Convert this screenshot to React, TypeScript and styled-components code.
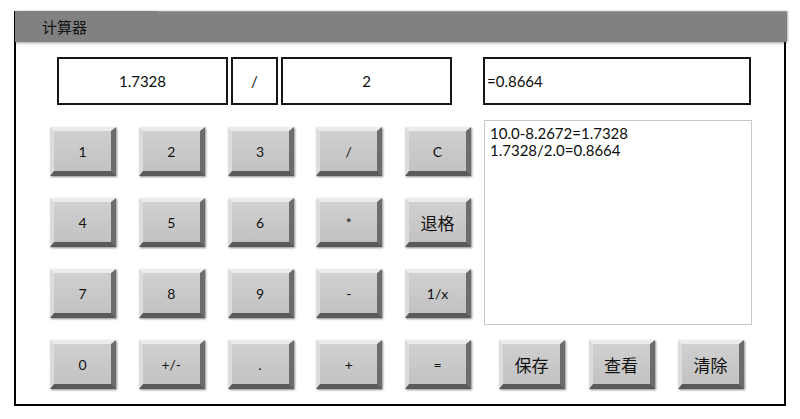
import React from 'react';
import styled, { createGlobalStyle } from 'styled-components';

const GlobalStyle = createGlobalStyle`
  html, body {
    margin: 0;
    padding: 0;
    background: #ffffff;
  }
  body {
    font-family: Lato, "Noto Sans CJK SC", sans-serif;
  }
`;

const Page = styled.div`
  padding: 11px 0 0 14px;
`;

const Frame = styled.div`
  box-sizing: border-box;
  width: 772px;
  height: 395px;
  border: 2px solid #000;
  border-top: 0;
  display: flex;
  flex-direction: column;
`;

const TitleBar = styled.div`
  display: flex;
  height: 31px;
  margin: 0 -3px 0 -1px;
  background: #818181;
  box-shadow: 0 2px 2px rgba(0, 0, 0, 0.18), 1px 0 2px rgba(0, 0, 0, 0.25);
`;

const TitleTab = styled.div`
  width: 143px;
  padding-left: 27px;
  box-sizing: border-box;
  display: flex;
  align-items: center;
  font-size: 15px;
  color: #141414;
`;

const TitleFill = styled.div`
  flex: 1;
  border-top: 1px solid #9a9a9a;
`;

const Body = styled.div`
  padding-top: 15px;
`;

const TopRow = styled.div`
  display: flex;
  margin-left: 41px;
  height: 48px;
`;

const Field = styled.div<{ $width: number; $align?: 'left' | 'center'; $gap?: number }>`
  box-sizing: border-box;
  width: ${({ $width }) => $width}px;
  margin-right: ${({ $gap = 3 }) => $gap}px;
  border: 2px solid #161616;
  display: flex;
  align-items: center;
  justify-content: ${({ $align = 'center' }) => ($align === 'left' ? 'flex-start' : 'center')};
  padding-left: ${({ $align = 'center' }) => ($align === 'left' ? '2px' : '0')};
  font-size: 15px;
  color: #0d0d0d;
`;

const Lower = styled.div`
  display: flex;
  margin-top: 15px;
`;

const Keypad = styled.div`
  display: grid;
  grid-template-columns: repeat(5, 66px);
  grid-auto-rows: 49px;
  column-gap: 22.75px;
  row-gap: 22px;
  margin: 7px 0 0 34px;
`;

const Key = styled.button<{ $cjk?: boolean }>`
  box-sizing: border-box;
  width: 66px;
  height: 49px;
  padding: 0;
  border-style: solid;
  border-width: 4px 5px 5px 4px;
  border-color: #ececec #6c6c6c #5a5a5a #dcdcdc;
  background: linear-gradient(#d0d0d0, #c2c2c2);
  box-shadow: 1px 1px 2px rgba(0, 0, 0, 0.45);
  font-family: Lato, "Noto Sans CJK SC", sans-serif;
  font-size: ${({ $cjk }) => ($cjk ? '17px' : '14px')};
  color: #121212;
  cursor: pointer;
`;

const RightPanel = styled.div`
  margin-left: 13px;
  width: 268px;
  display: flex;
  flex-direction: column;
`;

const History = styled.div`
  box-sizing: border-box;
  height: 205px;
  border: 1px solid #c8c8c8;
  padding: 4px 5px;
  font-size: 15px;
  line-height: 17px;
  color: #0d0d0d;
`;

const Actions = styled.div`
  display: flex;
  gap: 23.5px;
  margin: 15px 0 0 15px;
`;

const keys = ['1', '2', '3', '/', 'C', '4', '5', '6', '*', '退格', '7', '8', '9', '-', '1/x', '0', '+/-', '.', '+', '='];

const isCjk = (s: string) => /[\u4e00-\u9fff]/.test(s);

export default function App(): JSX.Element {
  return (
    <>
      <GlobalStyle />
      <Page>
        <Frame>
          <TitleBar>
            <TitleTab>计算器</TitleTab>
            <TitleFill />
          </TitleBar>
          <Body>
            <TopRow>
              <Field $width={171}>1.7328</Field>
              <Field $width={47}>/</Field>
              <Field $width={171} $gap={31}>2</Field>
              <Field $width={268} $align="left">=0.8664</Field>
            </TopRow>
            <Lower>
              <Keypad>
                {keys.map((k) => (
                  <Key key={k} $cjk={isCjk(k)}>
                    {k}
                  </Key>
                ))}
              </Keypad>
              <RightPanel>
                <History>
                  10.0-8.2672=1.7328
                  <br />
                  1.7328/2.0=0.8664
                </History>
                <Actions>
                  <Key $cjk>保存</Key>
                  <Key $cjk>查看</Key>
                  <Key $cjk>清除</Key>
                </Actions>
              </RightPanel>
            </Lower>
          </Body>
        </Frame>
      </Page>
    </>
  );
}
